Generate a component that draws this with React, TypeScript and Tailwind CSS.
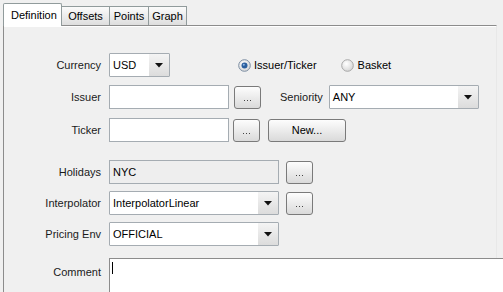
import React from "react";

const font = { fontFamily: '"Liberation Sans", Arial, sans-serif' };

function Combo({ w, value }: { w: string; value: string }) {
  return (
    <div className={`${w} h-[24px] flex bg-white border border-[#a5acb2] rounded-[1px]`}>
      <div className="flex-1 flex items-center pl-[3px] text-black truncate">{value}</div>
      <div className="w-[20px] flex items-center justify-center bg-gradient-to-b from-[#f4f4f4] to-[#dcdcdc]">
        <svg width="8" height="5" viewBox="0 0 8 5">
          <path d="M0 0 H8 L4 4.5 Z" fill="#111" />
        </svg>
      </div>
    </div>
  );
}

function Dots({ w = "w-[27px]" }: { w?: string }) {
  return (
    <div className={`${w} h-[23px] flex items-end justify-center pb-[7px] gap-[2px] rounded-[3px] border border-[#7a7a7a] bg-gradient-to-b from-[#fdfdfd] to-[#dadada]`}>
      <div className="w-px h-px bg-[#444]" />
      <div className="w-px h-px bg-[#444]" />
      <div className="w-px h-px bg-[#444]" />
    </div>
  );
}

function Field({ w, bg = "bg-white", value = "" }: { w: string; bg?: string; value?: string }) {
  return (
    <div className={`${w} h-[24px] ${bg} border border-[#a5acb2] flex items-center pl-[3px] text-black`}>
      {value}
    </div>
  );
}

function Label({ children }: { children: React.ReactNode }) {
  return <div className="w-[97px] text-right text-[#1a1a1a] mr-[8px] shrink-0">{children}</div>;
}

function Radio({ checked }: { checked: boolean }) {
  return (
    <svg width="13" height="13" viewBox="0 0 13 13">
      <defs>
        <radialGradient id={checked ? "rg1" : "rg2"} cx="0.4" cy="0.35" r="0.7">
          <stop offset="0" stopColor="#ffffff" />
          <stop offset="1" stopColor="#d4d4d4" />
        </radialGradient>
      </defs>
      <circle cx="6.5" cy="6.5" r="5.8" fill={`url(#${checked ? "rg1" : "rg2"})`} stroke={checked ? "#7c8ea3" : "#a8a8a8"} strokeWidth="1" />
      {checked && <circle cx="6.5" cy="6.5" r="3" fill="#2b5f9e" />}
      {checked && <circle cx="5.8" cy="5.8" r="1" fill="#8fb7e6" />}
    </svg>
  );
}

export default function App() {
  return (
    <div className="w-[503px] h-[292px] bg-[#f0f0f0] overflow-hidden text-[11px] leading-[13px]" style={font}>
      {/* tabs */}
      <div className="flex items-end h-[25px] pl-[3px]">
        <div className="w-[59px] bg-white border-t border-l border-r border-[#919b9c] rounded-t-[2px] flex items-center pl-[7px] text-black -mb-px relative z-10 h-[23px]">
          Definition
        </div>
        <div className="h-[19px] w-[48px] border-t border-r border-[#919b9c] bg-gradient-to-b from-[#fbfbfb] to-[#dedede] flex items-center justify-center text-black">
          Offsets
        </div>
        <div className="h-[19px] w-[39px] border-t border-r border-[#919b9c] bg-gradient-to-b from-[#fbfbfb] to-[#dedede] flex items-center justify-center text-black">
          Points
        </div>
        <div className="h-[19px] w-[38px] border-t border-r border-[#919b9c] bg-gradient-to-b from-[#fbfbfb] to-[#dedede] flex items-center justify-center text-black">
          Graph
        </div>
      </div>
      {/* panel */}
      <div className="ml-[3px] mr-[6px] border-t border-l border-[#8c8c8c] border-r border-r-[#e8e8e8] h-[300px]">
        <div className="border-t border-white h-full">
          {/* currency */}
          <div className="flex items-center h-[24px] mt-[26px]">
            <Label>Currency</Label>
            <Combo w="w-[61px]" value="USD" />
            <div className="flex items-center ml-[68px]">
              <Radio checked />
              <span className="ml-[3px] text-black">Issuer/Ticker</span>
            </div>
            <div className="flex items-center ml-[24px]">
              <Radio checked={false} />
              <span className="ml-[4px] text-black">Basket</span>
            </div>
          </div>
          {/* issuer */}
          <div className="flex items-center h-[24px] mt-[8px]">
            <Label>Issuer</Label>
            <Field w="w-[120px]" />
            <div className="ml-[5px]"><Dots /></div>
            <div className="ml-[19px] text-[#1a1a1a] mr-[6px]">Seniority</div>
            <Combo w="w-[150px]" value="ANY" />
          </div>
          {/* ticker */}
          <div className="flex items-center h-[24px] mt-[9px]">
            <Label>Ticker</Label>
            <Field w="w-[120px]" />
            <div className="ml-[4px]"><Dots /></div>
            <div className="ml-[8px]">
              <div className="w-[78px] h-[23px] flex items-center justify-center rounded-[3px] border border-[#7a7a7a] bg-gradient-to-b from-[#fdfdfd] to-[#dadada] text-black">
                New...
              </div>
            </div>
          </div>
          {/* holidays */}
          <div className="flex items-center h-[24px] mt-[18px]">
            <Label>Holidays</Label>
            <Field w="w-[170px]" bg="bg-[#eeeeee]" value="NYC" />
            <div className="ml-[7px]"><Dots /></div>
          </div>
          {/* interpolator */}
          <div className="flex items-center h-[24px] mt-[7px]">
            <Label>Interpolator</Label>
            <Combo w="w-[170px]" value="InterpolatorLinear" />
            <div className="ml-[7px]"><Dots /></div>
          </div>
          {/* pricing env */}
          <div className="flex items-center h-[24px] mt-[7px]">
            <Label>Pricing Env</Label>
            <Combo w="w-[170px]" value="OFFICIAL" />
          </div>
          {/* comment */}
          <div className="flex items-start mt-[12px] -mr-[10px]">
            <div className="pt-[8px]"><Label>Comment</Label></div>
            <div className="flex-1 h-[60px] bg-white border-t border-l border-[#8c8c8c] pl-[2px] pt-[3px]">
              <div className="w-px h-[12px] bg-black" />
            </div>
          </div>
        </div>
      </div>
    </div>
  );
}
